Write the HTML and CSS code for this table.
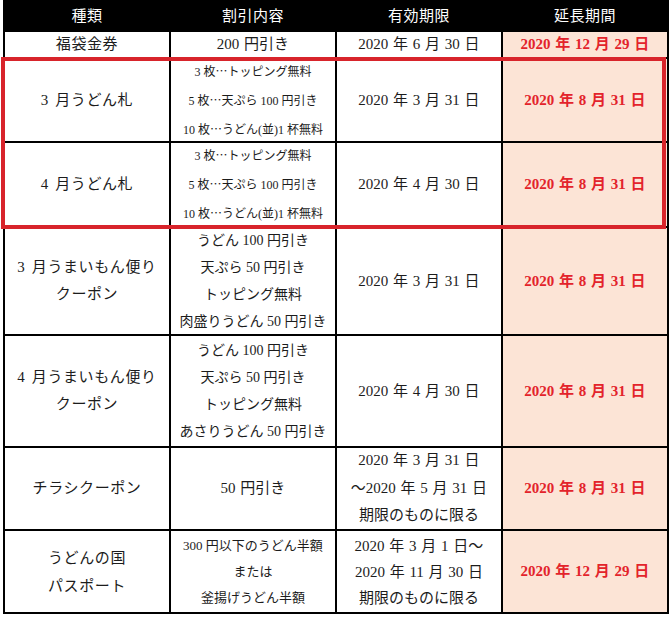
FILE: index.html
```html
<!DOCTYPE html>
<html lang="ja">
<head>
<meta charset="utf-8">
<title>延長期間一覧</title>
<link rel="stylesheet" href="styles.css">
</head>
<body>
<div class="sheet">
  <div class="grid">
    <div class="cell head">種類</div>
    <div class="cell head">割引内容</div>
    <div class="cell head">有効期限</div>
    <div class="cell head">延長期間</div>

    <div class="cell label">福袋金券</div>
    <div class="cell">200 円引き</div>
    <div class="cell">2020 年 6 月 30 日</div>
    <div class="cell ext">2020 年 12 月 29 日</div>

    <div class="cell label">3 月うどん札</div>
    <div class="cell small">
      <span>3 枚<span class="jp">…</span>トッピング無料</span>
      <span>5 枚<span class="jp">…</span>天ぷら 100 円引き</span>
      <span>10 枚<span class="jp">…</span>うどん(並)1 杯無料</span>
    </div>
    <div class="cell">2020 年 3 月 31 日</div>
    <div class="cell ext">2020 年 8 月 31 日</div>

    <div class="cell label">4 月うどん札</div>
    <div class="cell small">
      <span>3 枚<span class="jp">…</span>トッピング無料</span>
      <span>5 枚<span class="jp">…</span>天ぷら 100 円引き</span>
      <span>10 枚<span class="jp">…</span>うどん(並)1 杯無料</span>
    </div>
    <div class="cell">2020 年 4 月 30 日</div>
    <div class="cell ext">2020 年 8 月 31 日</div>

    <div class="cell label">
      <span>3 月うまいもん便り</span>
      <span>クーポン</span>
    </div>
    <div class="cell lines">
      <span>うどん 100 円引き</span>
      <span>天ぷら 50 円引き</span>
      <span>トッピング無料</span>
      <span>肉盛りうどん 50 円引き</span>
    </div>
    <div class="cell">2020 年 3 月 31 日</div>
    <div class="cell ext">2020 年 8 月 31 日</div>

    <div class="cell label">
      <span>4 月うまいもん便り</span>
      <span>クーポン</span>
    </div>
    <div class="cell lines">
      <span>うどん 100 円引き</span>
      <span>天ぷら 50 円引き</span>
      <span>トッピング無料</span>
      <span>あさりうどん 50 円引き</span>
    </div>
    <div class="cell">2020 年 4 月 30 日</div>
    <div class="cell ext">2020 年 8 月 31 日</div>

    <div class="cell label">チラシクーポン</div>
    <div class="cell">50 円引き</div>
    <div class="cell tall">
      <span>2020 年 3 月 31 日</span>
      <span>～2020 年 5 月 31 日</span>
      <span>期限のものに限る</span>
    </div>
    <div class="cell ext">2020 年 8 月 31 日</div>

    <div class="cell label wide">
      <span>うどんの国</span>
      <span>パスポート</span>
    </div>
    <div class="cell mid">
      <span>300 円以下のうどん半額</span>
      <span>または</span>
      <span>釜揚げうどん半額</span>
    </div>
    <div class="cell lines26">
      <span>2020 年 3 月 1 日～</span>
      <span>2020 年 11 月 30 日</span>
      <span>期限のものに限る</span>
    </div>
    <div class="cell ext">2020 年 12 月 29 日</div>
  </div>
  <div class="highlight"></div>
</div>
</body>
</html>
```

FILE: styles.css
```css
* {
  box-sizing: border-box;
}

body {
  margin: 0;
  background: #ffffff;
  font-family: "Liberation Serif", "Noto Sans CJK JP", serif;
  color: #1c1c1c;
}

.sheet {
  position: relative;
  padding-left: 3px;
  width: 672px;
}

.grid {
  width: 666px;
  display: grid;
  grid-template-columns: repeat(4, 1fr);
  grid-template-rows: 28px 25px 82px 83px 106px 110px 81px 81px;
  gap: 2px;
  padding: 2px;
  background: #000000;
}

.cell {
  background: #ffffff;
  display: flex;
  flex-direction: column;
  align-items: center;
  justify-content: center;
  text-align: center;
  font-size: 15px;
  line-height: 27px;
  word-spacing: 1px;
  white-space: nowrap;
}

.head {
  background: #000000;
  color: #ffffff;
  font-size: 15px;
  letter-spacing: 0.5px;
}

.label {
  letter-spacing: 0.6px;
  word-spacing: 2px;
}

.label.wide {
  line-height: 28px;
}

.small {
  font-size: 12px;
  line-height: 27px;
  word-spacing: 0;
}

.lines {
  font-size: 14px;
  line-height: 27px;
  word-spacing: 0;
}

.mid {
  font-size: 13px;
  line-height: 26px;
  word-spacing: 0;
}

.tall {
  line-height: 27.5px;
}

.lines26 {
  line-height: 26px;
}

.jp {
  font-family: "Noto Sans CJK JP", sans-serif;
}

.ext {
  background: #fce4d6;
  color: #e3232b;
  font-weight: bold;
}

.highlight {
  position: absolute;
  left: 1px;
  top: 57px;
  width: 665px;
  height: 172px;
  border: 4px solid #d8242b;
  pointer-events: none;
}
```
